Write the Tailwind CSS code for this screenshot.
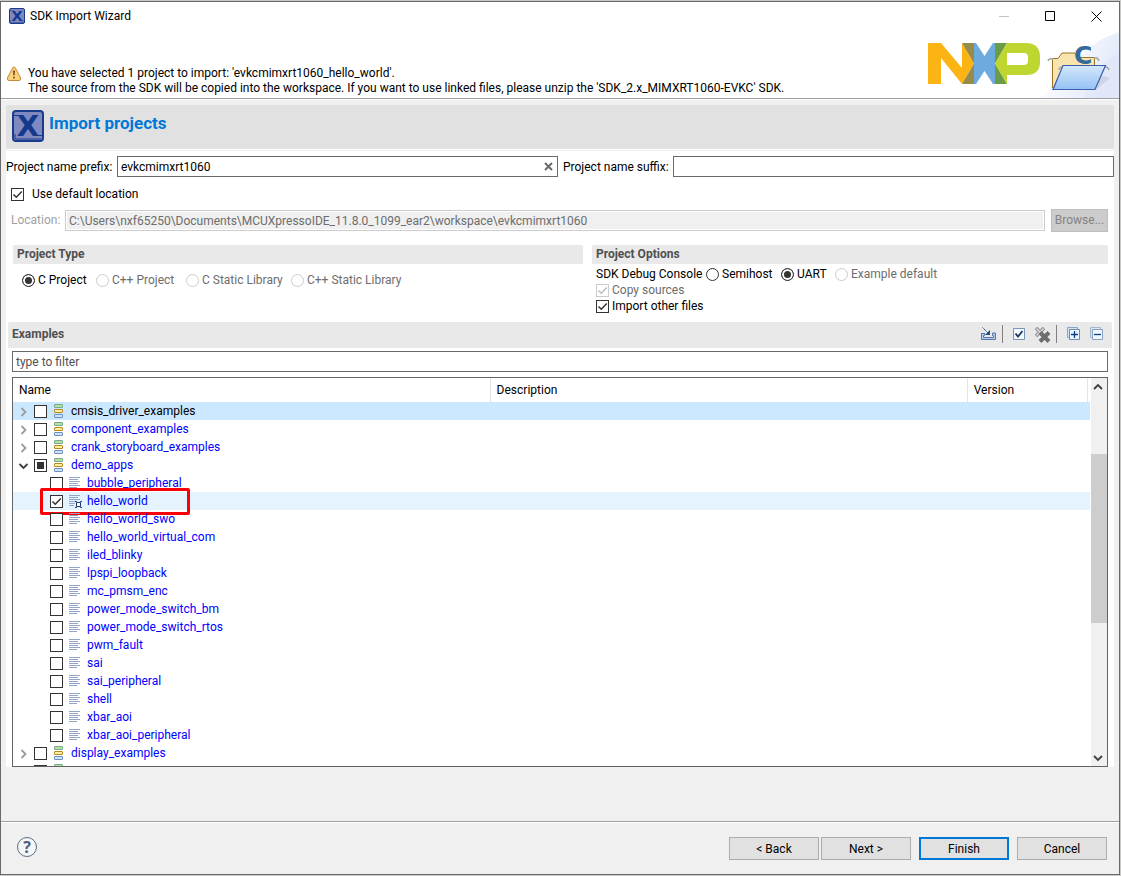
<!DOCTYPE html>
<html lang="en">
<head>
    <meta charset="UTF-8">
    <meta name="viewport" content="width=device-width, initial-scale=1.0">
    <title>SDK Import Wizard</title>
    <script src="https://cdn.jsdelivr.net/npm/@tailwindcss/browser@4"></script>
</head>
<body class="h-screen bg-[#c8c8c6] pt-px pr-px pb-px font-[Roboto,'Open_Sans',sans-serif] text-[12px] leading-[15px] text-black">
    <!-- Shared icons -->
    <svg class="hidden">
        <symbol id="tick" viewBox="0 0 13 13">
            <path d="M2.5 6.5L5.3 9.3L10.8 3.6" fill="none" stroke="currentColor" stroke-width="1.5" />
        </symbol>
        <symbol id="mcux" viewBox="0 0 32 32">
            <rect x="1" y="1" width="30" height="30" rx="3" fill="#8088c0" stroke="#1a3c8c" stroke-width="2" />
            <path d="M2 5.5H10M30 25.5H21M3 24V28Q3 29 5 29H29" fill="none" stroke="#1a3c8c" stroke-width="1" />
            <text x="16" y="26" text-anchor="middle" font-family="DejaVu Sans" font-weight="bold" font-size="29" fill="#123a8c">X</text>
        </symbol>
        <symbol id="category" viewBox="0 0 10 16">
            <rect x=".5" y="1.5" width="8" height="3" rx=".5" fill="#c2dba0" stroke="#6fae8c" />
            <rect x=".5" y="6.5" width="8" height="3" rx=".5" fill="#fff0a8" stroke="#b8861b" />
            <rect x=".5" y="11.5" width="8" height="3" rx=".5" fill="#cfe2f7" stroke="#6c8fc0" />
        </symbol>
        <symbol id="example" viewBox="0 0 14 15">
            <path d="M0 1.5H11M0 3.5H9M0 5.5H11M0 7.5H9M0 9.5H11M0 11.5H8" fill="none" stroke="#93a5c4" />
        </symbol>
        <symbol id="example-on" viewBox="0 0 14 15">
            <path d="M0 1.5H11M0 3.5H9M0 5.5H11M0 7.5H7M0 9.5H6M0 11.5H5" fill="none" stroke="#93a5c4" />
            <path d="M7.5 8.5H11.5V12.5H7.5ZM6 7.5H7.5V8.5M13 7.5H11.5V8.5M6 13.5H7.5V12.5M13 13.5H11.5V12.5" fill="#fff" stroke="#1f3a6e" />
        </symbol>
        <symbol id="closed" viewBox="0 0 8 10">
            <path d="M2 1L6 5L2 9" fill="none" stroke="#9c9c9c" stroke-width="1.8" />
        </symbol>
        <symbol id="open" viewBox="0 0 10 10">
            <path d="M1 3L5 7L9 3" fill="none" stroke="#404040" stroke-width="1.8" />
        </symbol>
    </svg>

    <div class="flex h-full flex-col overflow-hidden border border-[#6a6a6a] bg-[#f0f0f0]">
        <!-- Title and message -->
        <header class="relative flex h-[97px] shrink-0 flex-col border-b border-[#a0a0a0] bg-white">
            <svg class="absolute right-0 bottom-0 h-[67px] w-20" viewBox="0 0 80 67" aria-hidden="true">
                <defs>
                    <linearGradient id="glow" x1="0" y1="0" x2="1" y2=".4">
                        <stop offset=".2" stop-color="#fff" />
                        <stop offset="1" stop-color="#e4eafa" />
                    </linearGradient>
                </defs>
                <path d="M80 1Q52 10 38 30Q24 50 0 67H80Z" fill="url(#glow)" />
                <path d="M80 22Q60 28 45 67H80Z" fill="#dbe4f7" opacity=".4" />
            </svg>
            <div class="flex h-7 items-center pl-2">
                <svg class="size-4"><use href="#mcux" /></svg>
                <h1 class="grow pt-px pl-[5px]">SDK Import Wizard</h1>
                <button class="grid h-7 w-[46px] place-items-center" aria-label="Minimize" disabled>
                    <svg class="h-[11px] w-[11px]" viewBox="0 0 11 11"><path d="M0 5.5H10" stroke="#c4c4c4" /></svg>
                </button>
                <button class="grid h-7 w-[46px] place-items-center" aria-label="Maximize">
                    <svg class="h-[11px] w-[11px]" viewBox="0 0 11 11"><path d="M.5 .5H9.5V9.5H.5Z" fill="none" stroke="#000" /></svg>
                </button>
                <button class="grid h-7 w-[46px] place-items-center" aria-label="Close">
                    <svg class="h-[11px] w-[11px]" viewBox="0 0 11 11"><path d="M.5 .5L10.5 10.5M10.5 .5L.5 10.5" stroke="#000" /></svg>
                </button>
            </div>
            <div class="relative flex grow">
                <svg class="mt-9 ml-[5px] h-4 w-4" viewBox="0 0 16 16" aria-hidden="true">
                    <path d="M6.8 1.6Q8 .2 9.2 1.6L14.6 12Q15.2 14.4 13 14.5H3Q.8 14.4 1.4 12Z" fill="#fbd27c" stroke="#c98a3c" />
                    <path d="M7 4.5H9L8.6 9.5H7.4ZM7.2 10.8H8.8V12.5H7.2Z" fill="#7a4a12" />
                </svg>
                <p class="grow pt-9 pl-1.5 whitespace-nowrap">
                    You have selected 1 project to import: 'evkcmimxrt1060_hello_world'.<br>
                    The source from the SDK will be copied into the workspace. If you want to use linked files, please unzip the 'SDK_2.x_MIMXRT1060-EVKC' SDK.
                </p>
                <svg class="mt-[13px] h-[42px] w-28 shrink-0" viewBox="0 0 112 42" role="img" aria-label="NXP">
                    <path d="M0 0H13L34 25V0L46 20.5L34 41L13 15V41H0Z" fill="#fcb415" />
                    <path d="M34 0H46V20.5ZM34 41H46V20.5Z" fill="#958b4b" />
                    <path d="M46 0H48L56.5 13L65 0H67V41H65L56.5 28L48 41H46Z" fill="#6daade" />
                    <path d="M67 0H79L67 20.5ZM67 41H79L67 20.5Z" fill="#6a9c47" />
                    <path d="M79 0H98Q112 0 112 14V19Q112 32 98 32H79V41L67 20.5ZM79 10V22H96Q100 22 100 18V14Q100 10 96 10Z" fill="#bed62f" fill-rule="evenodd" />
                </svg>
                <svg class="mt-3.5 mr-[9px] ml-2 h-12 w-[62px] shrink-0 overflow-visible" viewBox="0 0 62 48" aria-hidden="true">
                    <defs>
                        <linearGradient id="front" x1="0" y1="0" x2="0" y2="1">
                            <stop offset="0" stop-color="#d4e8fc" />
                            <stop offset="1" stop-color="#94c2f4" />
                        </linearGradient>
                    </defs>
                    <path d="M10 45L48 46L62 34L56 32Z" fill="#b9bfd2" opacity=".5" />
                    <path d="M4.5 44V14.5H10L14 9H27L30 13.5H46.5V25" fill="#f8e4ae" stroke="#9a7424" />
                    <path d="M0 17Q1 14 5 15M46 14Q50 13 51 17M11 26Q11 23 15 23M54 23Q60 22 61 26" fill="none" stroke="#a8a8a8" stroke-width="1.5" />
                    <path d="M15 21.5H57.5L47 45.5H5Z" fill="url(#front)" stroke="#3c5cae" stroke-width="1.2" />
                    <text x="26" y="20" font-family="DejaVu Sans" font-weight="bold" font-size="25" fill="#36699c">C</text>
                </svg>
            </div>
        </header>

        <main class="flex min-h-0 grow flex-col border-t border-white px-[5px] pt-[5px] pb-[54px]">
            <div class="flex h-11 shrink-0 bg-[#e1e1e1] pt-[5px] pl-1.5">
                <svg class="size-8"><use href="#mcux" /></svg>
                <h2 class="pt-[3px] pl-[5px] text-[17px] leading-[20px] font-bold text-[#0078d7]">Import projects</h2>
            </div>

            <div class="flex min-h-0 grow flex-col bg-white pt-px">
                <div class="mb-[5px] h-px shrink-0 bg-[#f0f0f0]"></div>
                <div class="grid h-[21px] shrink-0 grid-cols-[111px_1fr_115px_1fr] whitespace-nowrap">
                    <label for="prefix" class="pt-1">Project name prefix:</label>
                    <div class="relative">
                        <input id="prefix" type="text" value="evkcmimxrt1060" class="h-[21px] w-full border border-[#6a6a6a] bg-white px-[3px]">
                        <button class="absolute top-[6px] right-[5px]" aria-label="Clear">
                            <svg class="size-[9px]" viewBox="0 0 9 9"><path d="M1 1L8 8M8 1L1 8" stroke="#6b6b6b" stroke-width="2" /></svg>
                        </button>
                    </div>
                    <label for="suffix" class="pt-1 pl-[5px]">Project name suffix:</label>
                    <input id="suffix" type="text" class="h-[21px] min-w-0 border border-[#6a6a6a] bg-white px-[3px]">
                </div>

                <label class="mt-[10px] ml-[5px] flex items-center gap-2">
                    <span class="relative size-[13px] text-[#333]">
                        <input type="checkbox" checked class="block size-[13px] appearance-none border border-[#333] bg-white">
                        <svg class="pointer-events-none absolute inset-0 size-[13px]"><use href="#tick" /></svg>
                    </span>
                    Use default location
                </label>

                <div class="mt-[7px] mr-1.5 ml-[5px] flex h-[23px] shrink-0 items-center">
                    <label for="location" class="w-[54px] shrink-0 text-[#a0a0a0]">Location:</label>
                    <input id="location" type="text" disabled value="C:\Users\nxf65250\Documents\MCUXpressoIDE_11.8.0_1099_ear2\workspace\evkcmimxrt1060" class="h-[21px] min-w-0 grow border border-[#cccccc] bg-[#f0f0f0] px-[3px] text-[#6d6d6d] inset-ring inset-ring-white">
                    <button disabled class="ml-1.5 h-[23px] w-[57px] border border-[#bfbfbf] bg-[#cccccc] text-[#838383]">Browse...</button>
                </div>

                <div class="mt-[13px] mr-1.5 ml-[7px] flex shrink-0 gap-[9px]">
                    <section class="grow-[570] basis-0">
                        <h3 class="h-[19px] rounded-t-xs bg-[#e9e9e9] pt-0.5 pl-1 font-bold text-[#505050]">Project Type</h3>
                        <div class="flex pt-[9px] pl-[9px] whitespace-nowrap text-[#6d6d6d]">
                            <label class="flex w-[74px] items-center gap-[3px] text-black">
                                <input type="radio" name="type" checked class="size-[13px] shrink-0 appearance-none rounded-full border border-[#333] bg-[#333] inset-ring-2 inset-ring-white">C Project
                            </label>
                            <label class="flex w-[90px] items-center gap-[3px]">
                                <input type="radio" name="type" disabled class="size-[13px] shrink-0 appearance-none rounded-full border border-[#cccccc] bg-white">C++ Project
                            </label>
                            <label class="flex w-[105px] items-center gap-[3px]">
                                <input type="radio" name="type" disabled class="size-[13px] shrink-0 appearance-none rounded-full border border-[#cccccc] bg-white">C Static Library
                            </label>
                            <label class="flex items-center gap-[3px]">
                                <input type="radio" name="type" disabled class="size-[13px] shrink-0 appearance-none rounded-full border border-[#cccccc] bg-white">C++ Static Library
                            </label>
                        </div>
                    </section>
                    <section class="h-[77px] grow-[516] basis-0">
                        <h3 class="h-[19px] rounded-t-xs bg-[#e9e9e9] pt-0.5 pl-1 font-bold text-[#505050]">Project Options</h3>
                        <div class="flex flex-col gap-px pt-[3px] pl-1 whitespace-nowrap">
                            <div class="flex">
                                <span class="w-[110px]">SDK Debug Console</span>
                                <label class="flex w-[75px] items-center gap-[3px]">
                                    <input type="radio" name="console" class="size-[13px] shrink-0 appearance-none rounded-full border border-[#333] bg-white">Semihost
                                </label>
                                <label class="flex w-[54px] items-center gap-[3px]">
                                    <input type="radio" name="console" checked class="size-[13px] shrink-0 appearance-none rounded-full border border-[#333] bg-[#333] inset-ring-2 inset-ring-white">UART
                                </label>
                                <label class="flex items-center gap-[3px] text-[#6d6d6d]">
                                    <input type="radio" name="console" disabled class="size-[13px] shrink-0 appearance-none rounded-full border border-[#cccccc] bg-white">Example default
                                </label>
                            </div>
                            <label class="flex items-center gap-[3px] text-[#6d6d6d]">
                                <span class="relative size-[13px] text-[#bcbcbc]">
                                    <input type="checkbox" checked disabled class="block size-[13px] appearance-none border border-[#cccccc] bg-white">
                                    <svg class="pointer-events-none absolute inset-0 size-[13px]"><use href="#tick" /></svg>
                                </span>
                                Copy sources
                            </label>
                            <label class="flex items-center gap-[3px]">
                                <span class="relative size-[13px] text-[#333]">
                                    <input type="checkbox" checked class="block size-[13px] appearance-none border border-[#333] bg-white">
                                    <svg class="pointer-events-none absolute inset-0 size-[13px]"><use href="#tick" /></svg>
                                </span>
                                Import other files
                            </label>
                        </div>
                    </section>
                </div>

                <div class="mx-0.5 flex h-[26px] shrink-0 items-center rounded-t-xs bg-[#e9e9e9] pr-2 pb-0.5 pl-1">
                    <h3 class="grow font-bold text-[#505050]">Examples</h3>
                    <button aria-label="Import archive">
                        <svg class="h-4 w-[17px]" viewBox="0 0 17 16">
                            <path d="M1 7.5H4M1.5 7V13.5H15.5V7H12.5V9.5H13.5V11.5H3.5V9.5H4.5V7" fill="#b4cbe8" stroke="#5877ae" />
                            <path d="M2.5 1.5L9 8" stroke="#1d4f80" stroke-dasharray="1.5 .5" />
                            <path d="M10 4V9H5Z" fill="#1d4f80" />
                        </svg>
                    </button>
                    <span class="mx-[5px] h-[18px] w-px bg-[#808080]"></span>
                    <button class="ml-1" aria-label="Select all">
                        <svg class="h-3.5 w-3.5" viewBox="0 0 14 14">
                            <path d="M1.5 1.5H12.5V12.5H1.5Z" fill="#f4faff" stroke="#7c93b4" />
                            <path d="M3.5 6.5L6 9.5L10.5 4" fill="none" stroke="#173760" stroke-width="1.8" />
                        </svg>
                    </button>
                    <button class="ml-2" aria-label="Clear selection">
                        <svg class="h-[17px] w-[17px]" viewBox="0 0 17 17">
                            <path d="M2 2L10 10M10 2L2 10" stroke="#8a8a8a" stroke-width="3.5" />
                            <path d="M2.5 2.5L9.5 9.5M9.5 2.5L2.5 9.5" stroke="#dedede" stroke-width="1.5" />
                            <path d="M6 6.5L15 15.5M15 6.5L6 15.5" stroke="#6e6e6e" stroke-width="4" />
                        </svg>
                    </button>
                    <span class="mx-[5px] h-[18px] w-px bg-[#808080]"></span>
                    <button class="ml-[5px]" aria-label="Expand all">
                        <svg class="h-[14px] w-[14px]" viewBox="0 0 14 14">
                            <path d="M.5 .5H10.5V10.5H.5Z" fill="#d4e2f2" stroke="#8ba5c8" />
                            <path d="M2.5 2.5H12.5V12.5H2.5Z" fill="#eef7ff" stroke="#6f8cb4" />
                            <path d="M4 7.5H11M7.5 4V11" stroke="#0c3f80" stroke-width="1.3" />
                        </svg>
                    </button>
                    <button class="ml-[9px]" aria-label="Collapse all">
                        <svg class="h-[14px] w-[14px]" viewBox="0 0 14 14">
                            <path d="M.5 .5H10.5V10.5H.5Z" fill="#d9e4f0" stroke="#a4b7d0" />
                            <path d="M2.5 2.5H12.5V12.5H2.5Z" fill="#eef7ff" stroke="#8ba0be" />
                            <path d="M4 7.5H11" stroke="#0c3f80" stroke-width="1.3" />
                        </svg>
                    </button>
                </div>

                <input type="text" aria-label="Filter examples" placeholder="type to filter" class="mx-1.5 mt-[3px] h-[21px] shrink-0 border border-[#6a6a6a] bg-white px-[3px] placeholder:text-[#505050]">

                <!-- Example tree -->
                <div class="mx-1.5 mt-[5px] flex min-h-0 grow basis-0 border border-[#646464]">
                    <div class="min-w-0 grow overflow-hidden">
                        <table class="w-full table-fixed border-collapse whitespace-nowrap">
                            <thead>
                                <tr class="h-6 text-left">
                                    <th class="w-[44.3%] border-r border-[#e5e5e5] pl-1.5 font-normal">Name</th>
                                    <th class="w-[44.3%] border-r border-[#e5e5e5] pl-1.5 font-normal">Description</th>
                                    <th class="border-r border-[#e5e5e5] pl-1.5 font-normal">Version</th>
                                    <th class="w-[3px]"></th>
                                </tr>
                            </thead>
                            <tbody id="examples"></tbody>
                        </table>
                    </div>
                    <div class="flex w-[17px] shrink-0 flex-col items-end border-l border-white bg-[#f0f0f0]">
                        <svg class="mt-1 mr-1 h-2.5 w-2.5 rotate-180"><use href="#open" /></svg>
                        <div class="mt-[62px] h-[169px] w-4 bg-[#cdcdcd]"></div>
                        <svg class="mt-auto mr-1 mb-[3px] h-2.5 w-2.5"><use href="#open" /></svg>
                    </div>
                </div>
            </div>
        </main>

        <footer class="flex h-[53px] shrink-0 border-t border-[#a0a0a0]">
            <div class="grow border-t border-white pt-[13px] pl-[15px]">
                <button aria-label="Help">
                    <svg class="size-[22px]" viewBox="0 0 22 22">
                        <circle cx="11" cy="11" r="9.5" fill="#f4f6f8" stroke="#5b6c85" />
                        <text x="11" y="17" text-anchor="middle" font-family="Open Sans" font-weight="700" font-size="16" fill="#4d6080">?</text>
                    </svg>
                </button>
            </div>
            <div class="flex border-t border-white pt-[14px] pr-3">
                <button class="h-[23px] w-[90px] border border-[#adadad] bg-[#e1e1e1] pt-px">&lt; Back</button>
                <button class="ml-0.5 h-[23px] w-[90px] border border-[#adadad] bg-[#e1e1e1] pt-px">Next &gt;</button>
                <button class="ml-2 h-[23px] w-[90px] border-2 border-[#0078d7] bg-[#e1e1e1] pt-px">Finish</button>
                <button class="ml-2 h-[23px] w-[90px] border border-[#adadad] bg-[#e1e1e1] pt-px">Cancel</button>
            </div>
        </footer>
    </div>

    <script>
        const examples = [
            { name: 'cmsis_driver_examples', group: true, selected: true },
            { name: 'component_examples', group: true },
            { name: 'crank_storyboard_examples', group: true },
            { name: 'demo_apps', group: true, open: true },
            { name: 'bubble_peripheral' },
            { name: 'hello_world', checked: true },
            { name: 'hello_world_swo' },
            { name: 'hello_world_virtual_com' },
            { name: 'iled_blinky' },
            { name: 'lpspi_loopback' },
            { name: 'mc_pmsm_enc' },
            { name: 'power_mode_switch_bm' },
            { name: 'power_mode_switch_rtos' },
            { name: 'pwm_fault' },
            { name: 'sai' },
            { name: 'sai_peripheral' },
            { name: 'shell' },
            { name: 'xbar_aoi' },
            { name: 'xbar_aoi_peripheral' },
            { name: 'display_examples', group: true },
            { name: '', group: true }
        ];

        function checkbox(item, id) {
            let mark = '';
            if (item.checked) {
                mark = '<svg class="pointer-events-none absolute inset-0 size-[13px] text-[#333]"><use href="#tick" /></svg>';
            } else if (item.open) {
                mark = '<span class="pointer-events-none absolute inset-[3px] bg-[#333]"></span>';
            }
            return `<span class="relative mt-px size-[13px] shrink-0">
                <input type="checkbox" id="${id}" ${item.checked ? 'checked' : ''} class="block size-[13px] appearance-none border border-[#333] bg-white">${mark}
            </span>`;
        }

        function row(item, index) {
            const id = `example-${index}`;
            let color = '';
            if (item.selected) color = 'bg-[#cce8ff]';
            if (item.checked) color = 'bg-[#e5f3ff]';
            let cell;
            if (item.group) {
                cell = `<div class="flex h-[18px] items-center pl-[5px]">
                    <svg class="mt-px mr-[5px] h-2.5 w-[11px] shrink-0"><use href="${item.open ? '#open' : '#closed'}" /></svg>
                    ${checkbox(item, id)}
                    <svg class="ml-[7px] h-4 w-2.5 shrink-0"><use href="#category" /></svg>
                    <label for="${id}" class="pl-[7px] ${item.selected ? 'text-black' : 'text-[#0000ff]'}">${item.name}</label>
                </div>`;
            } else {
                cell = `<div class="relative flex h-[18px] items-center pl-[37px]">
                    ${checkbox(item, id)}
                    <svg class="ml-1.5 h-[15px] w-3.5 shrink-0"><use href="${item.checked ? '#example-on' : '#example'}" /></svg>
                    <label for="${id}" class="pl-1 text-[#0000ff]">${item.name}</label>
                    ${item.checked ? '<span class="pointer-events-none absolute -top-1 left-[27px] h-[27px] w-[150px] rounded-xs border-3 border-[#fb0007]"></span>' : ''}
                </div>`;
            }
            return `<tr class="h-[18px] ${color}"><td class="p-0">${cell}</td><td></td><td></td><td></td></tr>`;
        }

        document.getElementById('examples').innerHTML = examples.map(row).join('');
        document.getElementById('example-3').indeterminate = true;
    </script>
</body>
</html>
